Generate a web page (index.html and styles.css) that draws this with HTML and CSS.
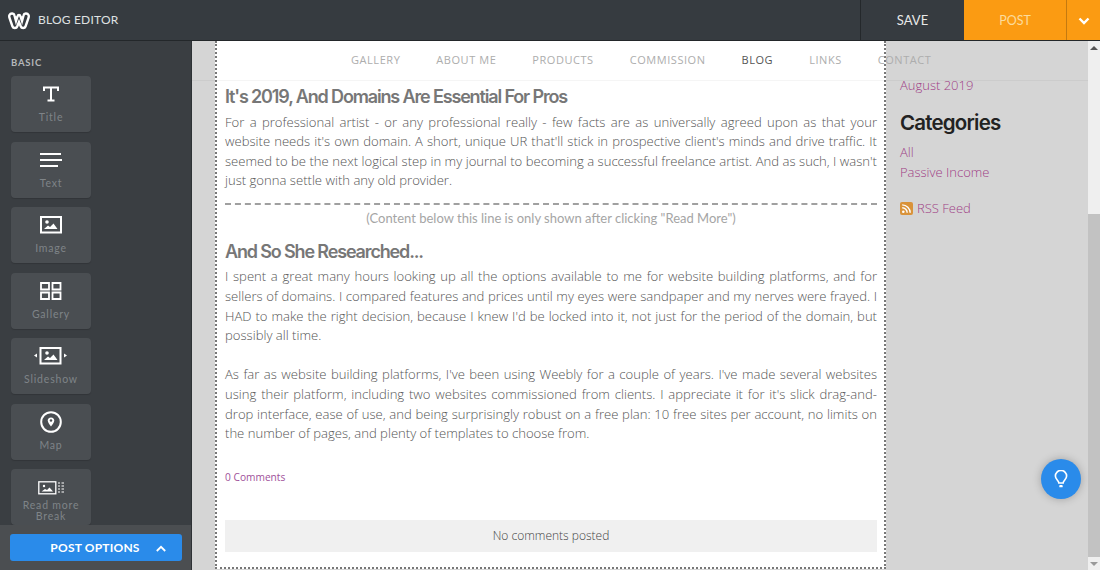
FILE: index.html
```html
<!DOCTYPE html>
<html lang="en">
<head>
  <meta charset="UTF-8" />
  <title>Blog Editor</title>
  <link rel="stylesheet" href="styles.css">
</head>
<body>

  <!-- Top bar -->
  <header class="topbar">
    <svg class="logo" width="22" height="18" viewBox="0 0 22 18">
      <path d="M1.500 3 C2.500 1 6 1 6.500 3.500 L8 9 L9.500 4.500 C10 2.500 12 2.500 12.500 4.500 L14 9 L15.500 3.500 C16 1 19.500 1 20.500 3 C21 4 20.800 5 20.500 6 L17.500 14.500 C16.800 16.500 13.500 16.500 12.800 14.500 L11 10 L9.200 14.500 C8.500 16.500 5.200 16.500 4.500 14.500 L1.500 6 C1.200 5 1 4 1.500 3 Z" fill="none" stroke="#fff" stroke-width="2.400"/>
    </svg>
    <span class="editor-name">BLOG EDITOR</span>
    <button class="btn-save">SAVE</button>
    <button class="btn-post">POST</button>
    <button class="btn-more">
      <svg width="12" height="8" viewBox="0 0 12 8"><path d="M1.500 1.500 L6 6 L10.500 1.500" fill="none" stroke="#fff" stroke-width="2.400"/></svg>
    </button>
  </header>

  <div class="workspace">

    <!-- Element sidebar -->
    <aside class="sidebar">
      <div class="sidebar-title">BASIC</div>

      <div class="tile">
        <div class="tile-icon">
          <svg width="18" height="16" viewBox="0 0 18 16"><path d="M2 5 V1.500 H16 V5 M9 1.500 V14.500 M5.500 14.500 H12.500" fill="none" stroke="#fff" stroke-width="2"/></svg>
        </div>
        <span>Title</span>
      </div>
      <div class="tile">
        <div class="tile-icon">
          <svg width="24" height="16" viewBox="0 0 24 16"><path d="M1 2 H22 M1 8 H23 M1 14 H19" fill="none" stroke="#fff" stroke-width="1.800"/></svg>
        </div>
        <span>Text</span>
      </div>
      <div class="tile">
        <div class="tile-icon">
          <svg width="24" height="20" viewBox="0 0 24 20"><rect x="2" y="2" width="20" height="15.500" fill="none" stroke="#fff" stroke-width="2"/><circle cx="8" cy="7" r="1.800" fill="#fff"/><path d="M5 14 L9 10.500 L11 12 L14.500 8.500 L18.500 14 Z" fill="#fff"/></svg>
        </div>
        <span>Image</span>
      </div>
      <div class="tile">
        <div class="tile-icon">
          <svg width="24" height="20" viewBox="0 0 24 20"><path d="M2 2 H10 V8.500 H2 Z M13.500 2 H21.500 V8.500 H13.500 Z M2 11.500 H10 V18 H2 Z M13.500 11.500 H21.500 V18 H13.500 Z" fill="none" stroke="#fff" stroke-width="1.800"/></svg>
        </div>
        <span>Gallery</span>
      </div>
      <div class="tile">
        <div class="tile-icon">
          <svg width="36" height="20" viewBox="0 0 36 20"><rect x="7.500" y="2" width="20" height="15.500" fill="none" stroke="#fff" stroke-width="2"/><circle cx="14" cy="7" r="1.800" fill="#fff"/><path d="M11 14 L15 10.500 L17 12 L20.500 8.500 L24.500 14 Z" fill="#fff"/><path d="M4 7.500 V11.500 L1 9.500 Z M31 7.500 V11.500 L34 9.500 Z" fill="#fff"/></svg>
        </div>
        <span>Slideshow</span>
      </div>
      <div class="tile">
        <div class="tile-icon">
          <svg width="24" height="24" viewBox="0 0 24 24"><circle cx="12" cy="12" r="9.800" fill="none" stroke="#fff" stroke-width="2"/><path d="M12 7.500 C9.800 7.500 8.700 9 8.700 10.500 C8.700 12.500 11 15 12 16.500 C13 15 15.300 12.500 15.300 10.500 C15.300 9 14.200 7.500 12 7.500 Z" fill="#fff"/><circle cx="12" cy="10.500" r="1.200" fill="#4a4e52"/></svg>
        </div>
        <span>Map</span>
      </div>
      <div class="tile tile-long">
        <div class="tile-icon">
          <svg width="27" height="14" viewBox="0 0 27 14"><rect x="0.800" y="0.800" width="17" height="12" fill="none" stroke="#fff" stroke-width="1.300"/><circle cx="6" cy="5" r="1.200" fill="#fff"/><path d="M3.500 10.500 L7 8 L9 9 L11.500 6.500 L15 10.500 Z" fill="#fff"/><path d="M20 2 H22 M23.500 2 H26 M20 5 H22 M23.500 5 H26 M20 8 H22 M23.500 8 H26 M20 11 H22 M23.500 11 H26" stroke="#fff" stroke-width="1.200"/></svg>
        </div>
        <span>Read more Break</span>
      </div>

      <div class="post-options">
        <button class="btn-options">POST OPTIONS<svg width="10" height="7" viewBox="0 0 10 7"><path d="M0.800 6 L5 1.800 L9.200 6" fill="none" stroke="#fff" stroke-width="1.800"/></svg></button>
      </div>
    </aside>

    <!-- Page preview -->
    <main class="canvas">
      <section class="post">
        <h2>It's 2019, And Domains Are Essential For Pros</h2>
        <p>For a professional artist - or any professional really - few facts are as universally agreed upon as that your website needs it's own domain. A short, unique UR that'll stick in prospective client's minds and drive traffic. It seemed to be the next logical step in my journal to becoming a successful freelance artist. And as such, I wasn't just gonna settle with any old provider.</p>
        <div class="read-more">(Content below this line is only shown after clicking "Read More")</div>
        <h2 class="researched">And So She Researched...</h2>
        <p>I spent a great many hours looking up all the options available to me for website building platforms, and for sellers of domains. I compared features and prices until my eyes were sandpaper and my nerves were frayed. I HAD to make the right decision, because I knew I'd be locked into it, not just for the period of the domain, but possibly all time.</p>
        <br>
        <p>As far as website building platforms, I've been using Weebly for a couple of years. I've made several websites using their platform, including two websites commissioned from clients. I appreciate it for it's slick drag-and-drop interface, ease of use, and being surprisingly robust on a free plan: 10 free sites per account, no limits on the number of pages, and plenty of templates to choose from.</p>
        <a class="comment-link">0 Comments</a>
        <div class="no-comments">No comments posted</div>
      </section>

      <aside class="blog-side">
        <a class="archive">August 2019</a>
        <h3>Categories</h3>
        <a>All</a>
        <a>Passive Income</a>
        <a class="rss">
          <svg width="13" height="13" viewBox="0 0 13 13"><rect width="13" height="13" rx="2" fill="#d9933a"/><circle cx="3.300" cy="9.700" r="1.300" fill="#fff"/><path d="M2.200 5.800 A5 5 0 0 1 7.200 10.800 M2.200 2.900 A8 8 0 0 1 10.200 10.800" fill="none" stroke="#fff" stroke-width="1.400"/></svg>
          RSS Feed
        </a>
      </aside>

      <nav class="site-nav">
        <a>GALLERY</a>
        <a>ABOUT ME</a>
        <a>PRODUCTS</a>
        <a>COMMISSION</a>
        <a class="current">BLOG</a>
        <a>LINKS</a>
        <a>CONTACT</a>
      </nav>

      <button class="tip-btn">
        <svg width="14" height="19" viewBox="0 0 16 22"><path d="M5.500 15 C5.500 12.500 1.500 11 1.500 7 A6.500 6.500 0 0 1 14.500 7 C14.500 11 10.500 12.500 10.500 15 Z" fill="none" stroke="#fff" stroke-width="1.900"/><rect x="6" y="17.500" width="4" height="2.500" rx="1" fill="#fff"/></svg>
      </button>
    </main>

    <div class="scrollbar">
      <span class="arrow-up"></span>
      <div class="thumb"></div>
      <span class="arrow-down"></span>
    </div>
  </div>

</body>
</html>
```

FILE: styles.css
```css
* {
  box-sizing: border-box;
  margin: 0;
  padding: 0;
}

body {
  width: 1100px;
  height: 570px;
  overflow: hidden;
  font-family: 'Open Sans', sans-serif;
  display: flex;
  flex-direction: column;
}

button {
  border: none;
  font-family: inherit;
}

/* Top bar */
.topbar {
  height: 41px;
  flex-shrink: 0;
  display: flex;
  align-items: stretch;
  background: #363b40;
  border-bottom: 1px solid #23272a;
}

.logo {
  margin: 12px 0 0 8px;
}

.editor-name {
  margin-left: 8px;
  line-height: 39px;
  font-family: 'Lato', sans-serif;
  font-size: 12px;
  letter-spacing: 0.2px;
  color: #dfe1e2;
  flex: 1;
}

.btn-save {
  width: 104px;
  background: #363b40;
  border-left: 1px solid #24282b;
  color: #e8e8e8;
  font-family: 'Lato', sans-serif;
  font-size: 13px;
}

.btn-post {
  width: 102px;
  background: #fb9b12;
  color: #fbdc9c;
  font-family: 'Lato', sans-serif;
  font-size: 12.500px;
}

.btn-more {
  width: 34px;
  background: #fb9b12;
  border-left: 1px solid #c47a10;
}

/* Sidebar */
.workspace {
  flex: 1;
  display: flex;
  min-height: 0;
}

.sidebar {
  width: 192px;
  flex-shrink: 0;
  position: relative;
  overflow: hidden;
  background: #3a3e42;
  border-right: 1px solid #2e3235;
  padding: 16px 0 0 11px;
}

.sidebar-title {
  font-family: 'Lato', sans-serif;
  font-size: 9.500px;
  font-weight: 700;
  letter-spacing: 0.8px;
  color: #b4b7b9;
  line-height: 11px;
  margin-bottom: 8px;
}

.tile {
  width: 80px;
  height: 56px;
  margin-bottom: 9.500px;
  background: #4a4e52;
  border-radius: 4px;
  box-shadow: 0 1px 1px rgba(0,0,0,0.15);
  padding-top: 5px;
  color: #7f8488;
  font-family: 'Lato', sans-serif;
  font-size: 10.500px;
  line-height: 14px;
  letter-spacing: 0.8px;
  text-align: center;
}

.tile-icon {
  height: 26px;
  margin-bottom: 3px;
  display: flex;
  align-items: center;
  justify-content: center;
}

.tile-long {
  padding-top: 5.500px;
}

.tile-long span {
  display: block;
  line-height: 11px;
}

.tile-long .tile-icon {
  margin-bottom: -1px;
}

.post-options {
  position: absolute;
  left: 0;
  right: 0;
  bottom: 0;
  height: 45px;
  background: #4b4e51;
  padding: 9px 10px 0;
}

.btn-options {
  width: 172px;
  height: 27px;
  background: #2a8bea;
  border-radius: 3px;
  color: #fff;
  font-family: 'Lato', sans-serif;
  font-weight: 700;
  font-size: 12px;
  letter-spacing: 0.2px;
  padding-left: 24px;
}

.btn-options svg {
  margin-left: 16px;
}

/* Page preview */
.canvas {
  flex: 1;
  position: relative;
  overflow: hidden;
  background: #d5d5d5;
}

.site-nav {
  position: absolute;
  top: 0;
  left: 0;
  right: 0;
  height: 40px;
  padding: 0 0 2px 159px;
  display: flex;
  align-items: center;
  gap: 36px;
  border-bottom: 1px solid rgba(0,0,0,0.04);
  font-size: 11px;
  letter-spacing: 0.550px;
  color: #adadad;
}

.site-nav .current {
  color: #555;
}

.post {
  position: absolute;
  top: 0;
  left: 23px;
  width: 671px;
  height: 528px;
  background: #fff;
  border: 2px dotted #777;
  border-top: none;
  padding: 45px 7px 0 8px;
  font-weight: 300;
  font-size: 13.100px;
  line-height: 19.600px;
  color: #555;
  text-align: justify;
}

.post h2 {
  font-family: 'Inter', sans-serif;
  font-size: 18px;
  font-weight: 600;
  letter-spacing: -1.150px;
  line-height: 22px;
  color: #777;
  margin-bottom: 4.500px;
  text-align: left;
}

.post .researched {
  margin-bottom: 4px;
}

.read-more {
  margin-top: 12.500px;
  border-top: 2px dashed #a0a0a0;
  padding-top: 4px;
  height: 38px;
  text-align: center;
  color: #a5a5a5;
  font-family: 'Lato', sans-serif;
  font-size: 13px;
  font-weight: 400;
}

.comment-link {
  display: block;
  margin-top: 24px;
  font-size: 10.200px;
  font-weight: 400;
  color: #a0509a;
}

.no-comments {
  margin-top: 33px;
  height: 32px;
  line-height: 32px;
  background: #f0f0f0;
  text-align: center;
  font-size: 12px;
  font-weight: 300;
  color: #444;
}

.blog-side {
  position: absolute;
  top: 34px;
  left: 708px;
  display: flex;
  flex-direction: column;
  align-items: flex-start;
  font-size: 13px;
  font-weight: 300;
  line-height: 20px;
  color: #a03f86;
}

.blog-side h3 {
  font-family: 'Inter', sans-serif;
  font-size: 20.500px;
  font-weight: 600;
  letter-spacing: -0.8px;
  line-height: 26px;
  color: #222;
  margin: 15px 0 6px;
}

.blog-side .rss {
  margin-top: 16px;
  display: flex;
  align-items: center;
  gap: 4px;
}

.tip-btn {
  position: absolute;
  left: 849px;
  top: 418px;
  width: 40px;
  height: 40px;
  border-radius: 50%;
  background: #2a8bea;
  box-shadow: 0 0 8px rgba(0,0,0,0.25);
  display: flex;
  align-items: center;
  justify-content: center;
}

/* Scrollbar */
.scrollbar {
  width: 12px;
  flex-shrink: 0;
  background: #efefef;
  display: flex;
  flex-direction: column;
  align-items: center;
  padding-top: 5px;
}

.arrow-up {
  border: 4px solid transparent;
  border-top: none;
  border-bottom: 4px solid #555;
}

.thumb {
  width: 100%;
  height: 343px;
  margin-top: 164px;
  background: #c2c2c2;
}

.arrow-down {
  margin-top: 5px;
  border: 4px solid transparent;
  border-bottom: none;
  border-top: 4px solid #999;
}
```
